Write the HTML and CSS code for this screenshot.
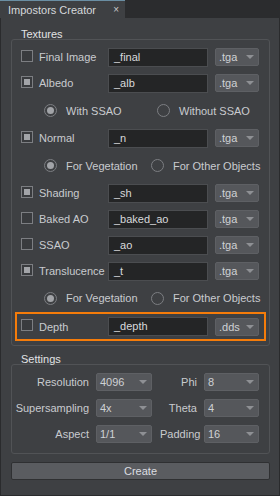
FILE: index.html
```html
<!DOCTYPE html>
<html lang="en">
<head>
  <meta charset="UTF-8" />
  <meta name="viewport" content="width=device-width, initial-scale=1.0" />
  <title>Impostors Creator</title>
  <link rel="stylesheet" href="styles.css">
</head>
<body>

  <!-- Tabs -->
  <div class="tabbar">
    <div class="tab">
      <span>Impostors Creator</span>
      <span class="tab-close">×</span>
    </div>
  </div>

  <div class="panel">

    <!-- Textures -->
    <div class="group-title">Textures</div>
    <div class="group textures">
      <div class="row">
        <label class="check"><span class="box"></span>Final Image</label>
        <div class="field">_final</div>
        <div class="combo">.tga</div>
      </div>
      <div class="row">
        <label class="check"><span class="box on"></span>Albedo</label>
        <div class="field">_alb</div>
        <div class="combo">.tga</div>
      </div>
      <div class="radios ssao">
        <label class="radio"><span class="dot on"></span>With SSAO</label>
        <label class="radio"><span class="dot"></span>Without SSAO</label>
      </div>
      <div class="row">
        <label class="check"><span class="box on"></span>Normal</label>
        <div class="field">_n</div>
        <div class="combo">.tga</div>
      </div>
      <div class="radios veg">
        <label class="radio"><span class="dot on"></span>For Vegetation</label>
        <label class="radio"><span class="dot"></span>For Other Objects</label>
      </div>
      <div class="row">
        <label class="check"><span class="box on"></span>Shading</label>
        <div class="field">_sh</div>
        <div class="combo">.tga</div>
      </div>
      <div class="row">
        <label class="check"><span class="box"></span>Baked AO</label>
        <div class="field">_baked_ao</div>
        <div class="combo">.tga</div>
      </div>
      <div class="row">
        <label class="check"><span class="box"></span>SSAO</label>
        <div class="field">_ao</div>
        <div class="combo">.tga</div>
      </div>
      <div class="row">
        <label class="check"><span class="box on"></span>Translucence</label>
        <div class="field">_t</div>
        <div class="combo">.tga</div>
      </div>
      <div class="radios veg last">
        <label class="radio"><span class="dot on"></span>For Vegetation</label>
        <label class="radio"><span class="dot"></span>For Other Objects</label>
      </div>
      <div class="row selected">
        <label class="check"><span class="box"></span>Depth</label>
        <div class="field">_depth</div>
        <div class="combo">.dds</div>
      </div>
    </div>

    <!-- Settings -->
    <div class="group-title settings-title">Settings</div>
    <div class="group settings">
      <div class="srow">
        <span class="slabel">Resolution</span>
        <div class="combo">4096</div>
        <span class="slabel">Phi</span>
        <div class="combo">8</div>
      </div>
      <div class="srow">
        <span class="slabel">Supersampling</span>
        <div class="combo">4x</div>
        <span class="slabel">Theta</span>
        <div class="combo">4</div>
      </div>
      <div class="srow">
        <span class="slabel">Aspect</span>
        <div class="combo">1/1</div>
        <span class="slabel">Padding</span>
        <div class="combo">16</div>
      </div>
    </div>

    <button class="create">Create</button>
  </div>

</body>
</html>
```

FILE: styles.css
```css
body {
  margin: 0;
  width: 280px;
  height: 496px;
  background: #2b2c2e;
  font-family: "Liberation Sans", Arial, sans-serif;
  font-size: 11px;
  color: #c9cbcf;
  overflow: hidden;
}

/* Tabs */
.tabbar {
  height: 18px;
  display: flex;
}

.tab {
  width: 125px;
  box-sizing: border-box;
  border-top: 1px solid #6a8ea3;
  background: #3e4043;
  display: flex;
  align-items: center;
  justify-content: space-between;
  padding: 0 6px 0 8px;
  color: #d6d8db;
  line-height: 16px;
}

.tab-close {
  font-size: 10px;
  color: #c8c8c8;
}

/* Panel */
.panel {
  height: 478px;
  box-sizing: border-box;
  background: #3e4043;
  border: 1px solid #2a2b2d;
  border-top: 0;
  padding: 11px 9px 0 10px;
}

.group-title {
  line-height: 10px;
  height: 10px;
  padding-left: 10px;
  color: #e2e3e5;
}

.settings-title {
  margin-top: 8px;
}

.group {
  border: 1px solid #515356;
  border-radius: 3px;
}

.textures {
  padding: 4px 0;
}

.settings {
  padding: 4px 0 6px;
}

/* Texture rows */
.row {
  height: 26px;
  display: grid;
  grid-template-columns: 80px 100px 44px;
  column-gap: 7px;
  align-items: center;
  padding: 0 10px 0 9px;
}

.row.selected {
  height: 25px;
  margin: 0 3px;
  border: 2px solid #f57c0a;
  padding: 0 5px 0 4px;
}

.check {
  display: flex;
  align-items: center;
  gap: 6px;
  white-space: nowrap;
}

.box {
  flex-shrink: 0;
  width: 12px;
  height: 12px;
  box-sizing: border-box;
  border: 1px solid #7c7e82;
  background: #393b3e;
  margin-top: -3px;
  display: flex;
  align-items: center;
  justify-content: center;
}

.box.on::after {
  content: "";
  width: 6px;
  height: 6px;
  background: #a2a4a8;
}

.field {
  height: 19px;
  box-sizing: border-box;
  background: #242526;
  border: 1px solid #4b4d50;
  padding-left: 5px;
  line-height: 17px;
  color: #d8d9dc;
}

.combo {
  height: 18px;
  box-sizing: border-box;
  background: #55575b;
  border: 1px solid #5e6064;
  border-radius: 2px;
  padding: 0 4px 0 3px;
  line-height: 16px;
  color: #cfd1d4;
  display: flex;
  justify-content: space-between;
  align-items: center;
}

.combo::after {
  content: "";
  border-left: 4px solid transparent;
  border-right: 4px solid transparent;
  border-top: 4px solid #8e9094;
}

/* Radio rows */
.radios {
  height: 29px;
  display: grid;
  align-items: center;
  padding-left: 32px;
}

.radios.ssao {
  grid-template-columns: 113px auto;
}

.radios.veg {
  grid-template-columns: 107px auto;
}

.radios.last {
  height: 28px;
}

.radio {
  display: flex;
  align-items: center;
  gap: 9px;
  white-space: nowrap;
}

.dot {
  flex-shrink: 0;
  width: 13px;
  height: 13px;
  box-sizing: border-box;
  border: 1px solid #7c7e82;
  border-radius: 50%;
  display: flex;
  align-items: center;
  justify-content: center;
}

.dot.on::after {
  content: "";
  width: 7px;
  height: 7px;
  border-radius: 50%;
  background: #a2a4a8;
}

/* Settings rows */
.srow {
  height: 26px;
  display: grid;
  grid-template-columns: 77px 63px 45px 62px;
  align-items: center;
}

.srow .slabel {
  text-align: right;
  white-space: nowrap;
}

.srow .combo {
  margin-left: 7px;
}

.srow .combo + .slabel {
  margin-left: 8px;
}

/* Button */
.create {
  display: block;
  width: 100%;
  height: 18px;
  margin-top: 8px;
  padding: 0;
  background: #5a5c60;
  border: 1px solid #2f3032;
  border-radius: 2px;
  font-family: "Liberation Sans", Arial, sans-serif;
  font-size: 11px;
  color: #dcdde0;
  line-height: 16px;
}
```
